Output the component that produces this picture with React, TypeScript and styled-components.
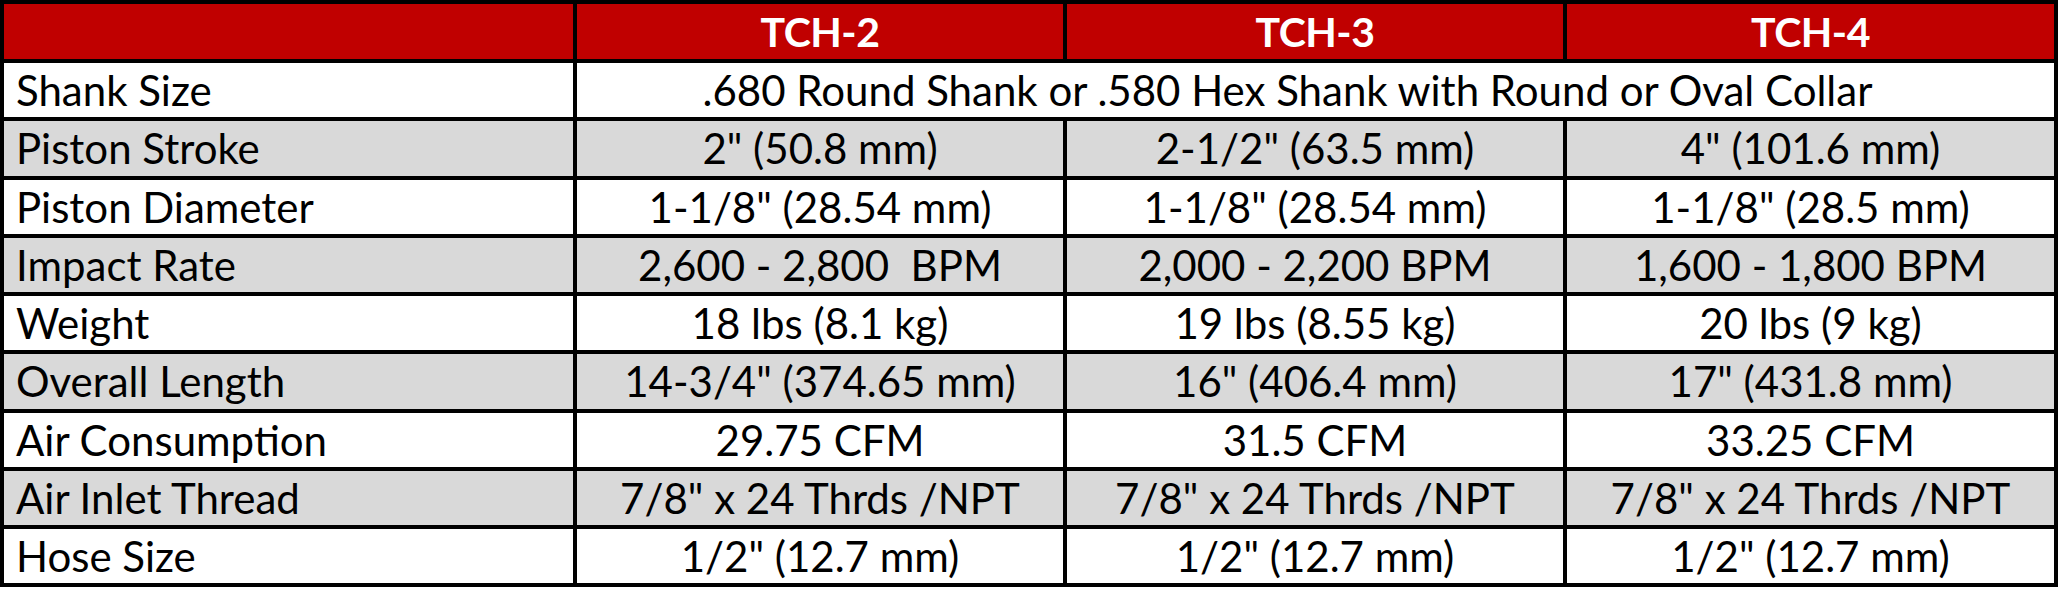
import React from 'react';
import { styled, createGlobalStyle } from 'styled-components';

interface SpecRow {
	label: string;
	values: string[];
}

const models = ['TCH-2', 'TCH-3', 'TCH-4'];

const rows: SpecRow[] = [
	{ label: 'Shank Size', values: ['.680 Round Shank or .580 Hex Shank with Round or Oval Collar'] },
	{ label: 'Piston Stroke', values: ['2" (50.8 mm)', '2-1/2" (63.5 mm)', '4" (101.6 mm)'] },
	{ label: 'Piston Diameter', values: ['1-1/8" (28.54 mm)', '1-1/8" (28.54 mm)', '1-1/8" (28.5 mm)'] },
	{ label: 'Impact Rate', values: ['2,600 - 2,800  BPM', '2,000 - 2,200 BPM', '1,600 - 1,800 BPM'] },
	{ label: 'Weight', values: ['18 lbs (8.1 kg)', '19 lbs (8.55 kg)', '20 lbs (9 kg)'] },
	{ label: 'Overall Length', values: ['14-3/4" (374.65 mm)', '16" (406.4 mm)', '17" (431.8 mm)'] },
	{ label: 'Air Consumption', values: ['29.75 CFM', '31.5 CFM', '33.25 CFM'] },
	{ label: 'Air Inlet Thread', values: ['7/8" x 24 Thrds /NPT', '7/8" x 24 Thrds /NPT', '7/8" x 24 Thrds /NPT'] },
	{ label: 'Hose Size', values: ['1/2" (12.7 mm)', '1/2" (12.7 mm)', '1/2" (12.7 mm)'] },
];

function App() {
	return (
		<>
			<GlobalStyle />
			<Table>
				<HeaderCell />
				{models.map((m) => (
					<HeaderCell key={m}>{m}</HeaderCell>
				))}
				{rows.map((row, i) => (
					<React.Fragment key={row.label}>
						<LabelCell shaded={i % 2 === 1}>{row.label}</LabelCell>
						{row.values.map((v, j) => (
							<ValueCell key={j} shaded={i % 2 === 1} span={row.values.length === 1 ? 3 : 1}>
								{v}
							</ValueCell>
						))}
					</React.Fragment>
				))}
			</Table>
		</>
	);
}

export default App;

const GlobalStyle = createGlobalStyle`
	html, body {
		margin: 0;
		padding: 0;
		background: #ffffff;
	}
	body {
		font-family: Lato, "Open Sans", sans-serif;
	}
`;

interface CellProps {
	shaded?: boolean;
	span?: number;
}

const Table = styled.div`
	display: grid;
	grid-template-columns: 569px 486px 496px 487px;
	grid-template-rows: 55px repeat(9, 54.25px);
	gap: 4px;
	padding: 4px;
	width: max-content;
	background: #000000;
`;

const HeaderCell = styled.div`
	display: flex;
	align-items: center;
	justify-content: center;
	background: #c00000;
	color: #ffffff;
	font-size: 41px;
	font-weight: 700;
	letter-spacing: -0.5px;
`;

const LabelCell = styled.div<CellProps>`
	display: flex;
	align-items: center;
	padding-left: 12px;
	background: ${(props) => (props.shaded ? '#d9d9d9' : '#ffffff')};
	color: #000000;
	font-size: 42px;
	white-space: nowrap;
`;

// the merged shank-size cell sits a little left of centre in the original
const ValueCell = styled.div<CellProps>`
	display: flex;
	align-items: center;
	justify-content: center;
	grid-column: span ${(props) => props.span ?? 1};
	padding-right: ${(props) => ((props.span ?? 1) > 1 ? '56px' : '0')};
	background: ${(props) => (props.shaded ? '#d9d9d9' : '#ffffff')};
	color: #000000;
	font-size: 42px;
	white-space: pre;
`;
